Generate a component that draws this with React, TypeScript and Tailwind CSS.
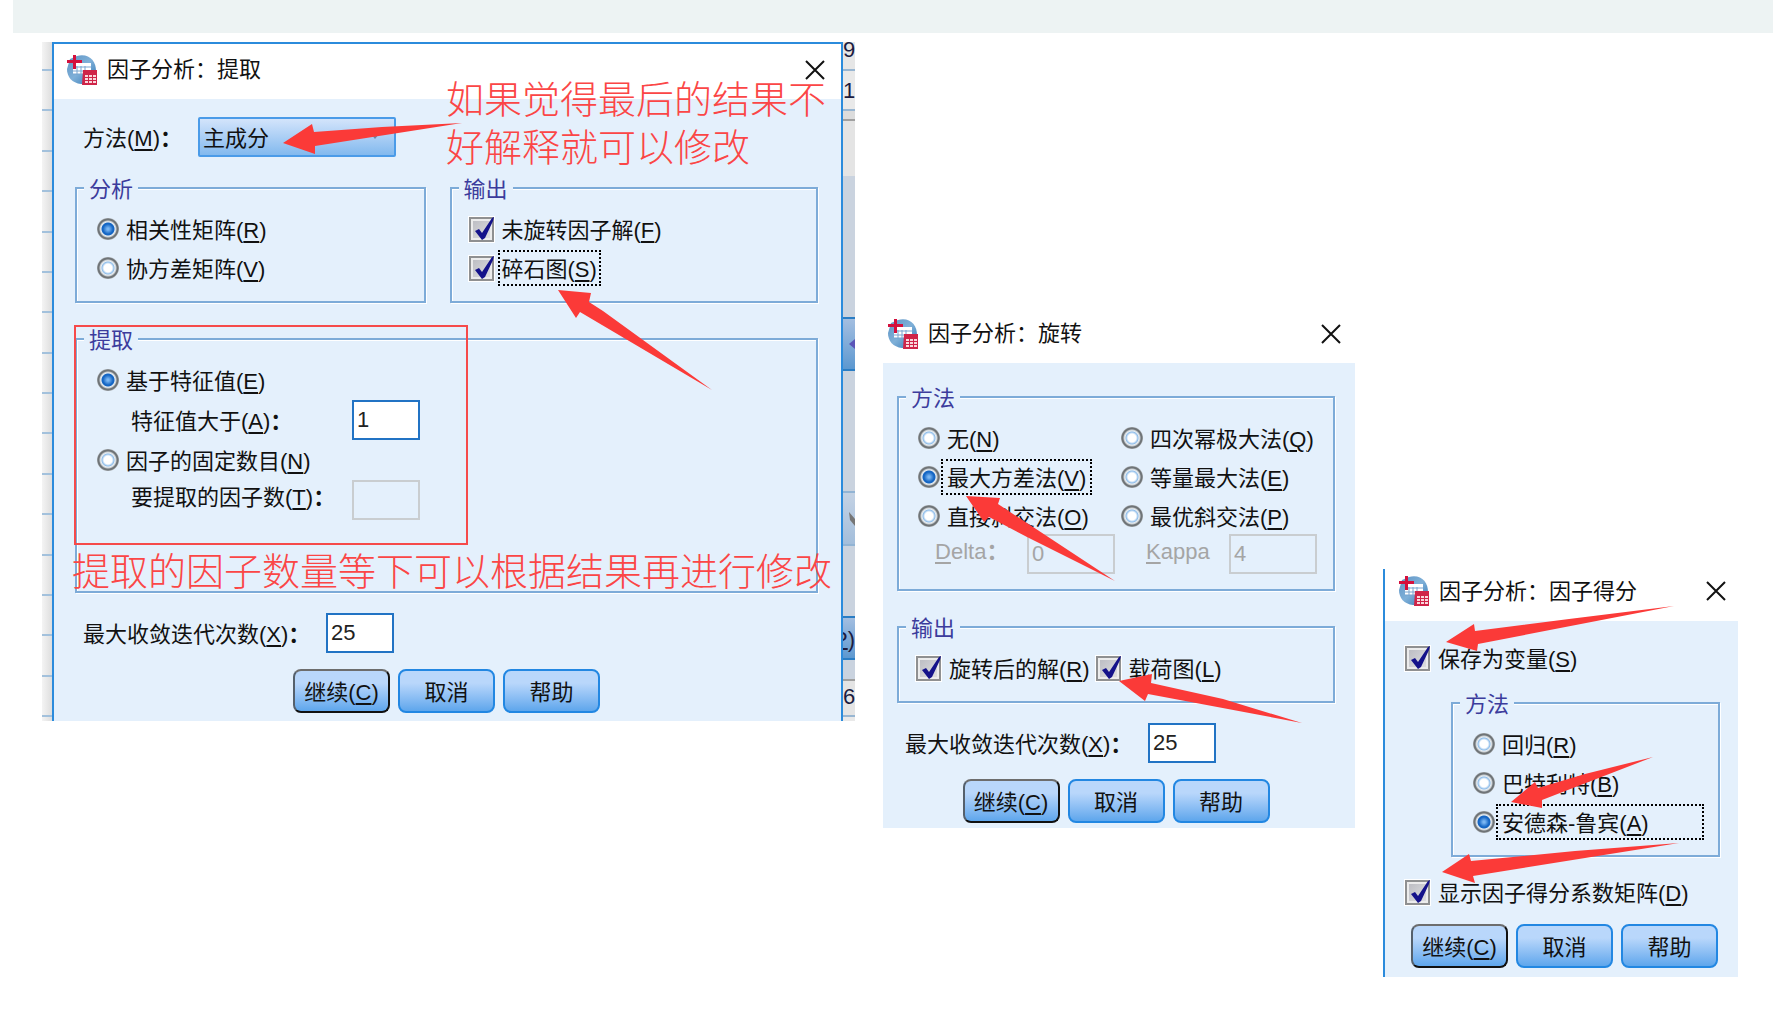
import type { ReactNode } from 'react';
import clsx from 'clsx';

interface OptionProps {
  text: string;
  hotkey: string;
  checked?: boolean;
  focused?: boolean;
}

function Hotkey({ text, hotkey }: { text: string; hotkey: string }) {
  return (
    <>
      {text}(<span className="underline decoration-2 underline-offset-3">{hotkey}</span>)
    </>
  );
}

function Radio({ text, hotkey, checked, focused, name, wide }: OptionProps & { name: string; wide?: boolean }) {
  return (
    <label className="flex h-9 items-center gap-px whitespace-nowrap">
      <input
        type="radio"
        name={name}
        defaultChecked={checked}
        className="size-[22px] shrink-0 appearance-none rounded-full bg-[radial-gradient(circle_closest-side,#ffffff_0_4px,#8fbdea_6px,#e8eef2_7px,#c9ced2_8px,#6f7477_9px_10px,#a4a9ad_11px)] checked:bg-[radial-gradient(circle_closest-side,#7ab6f2_0_1px,#1566c4_5px_6px,#e8eef2_7px,#c9ced2_8px,#6f7477_9px_10px,#a4a9ad_11px)]"
      />
      <span
        className={clsx(
          'h-9 border-2 border-dotted px-1 leading-9',
          focused ? 'border-black' : 'border-transparent',
          wide && 'grow',
        )}
      >
        <Hotkey text={text} hotkey={hotkey} />
      </span>
    </label>
  );
}

function Checkbox({ text, hotkey, checked, focused }: OptionProps) {
  return (
    <label className="flex h-9 items-center gap-1 whitespace-nowrap">
      <span className="relative size-[25px] shrink-0">
        <input
          type="checkbox"
          defaultChecked={checked}
          className="peer block size-[25px] appearance-none border-2 border-[#8f9091] bg-linear-to-br from-[#b9bac0] to-[#e2e2e4] shadow-[0_0_0_1px_#fff,inset_0_0_0_2px_#ececec]"
        />
        <svg
          viewBox="0 0 25 25"
          className="pointer-events-none absolute inset-0 hidden overflow-visible peer-checked:block"
        >
          <path d="M6 14 L10 12 L13 16 L23 1 L25 0 L24 4 L16 21 L13 23 Z" fill="#14128a" />
        </svg>
      </span>
      <span
        className={clsx('h-9 border-2 border-dotted px-0.5 leading-9', focused ? 'border-black' : 'border-transparent')}
      >
        <Hotkey text={text} hotkey={hotkey} />
      </span>
    </label>
  );
}

function Group({ title, className, children }: { title: string; className?: string; children: ReactNode }) {
  return (
    <fieldset
      className={clsx(
        'min-w-0 border-2 border-[#7dabd8] pb-[15px] shadow-[1px_1px_0_#fff,inset_1px_1px_0_#fff]',
        className,
      )}
    >
      <legend className="ml-[7px] h-6 bg-[#e4f0fc] px-[5px] leading-7 text-[#3c3c9c]">{title}</legend>
      <div className="pt-[11px]">{children}</div>
    </fieldset>
  );
}

function NumberBox({ id, value, disabled, className }: { id: string; value: string; disabled?: boolean; className?: string }) {
  return (
    <input
      id={id}
      type="text"
      defaultValue={value}
      disabled={disabled}
      className={clsx(
        'h-10 border-2 px-[3px]',
        disabled ? 'border-[#c9cdd0] bg-transparent text-[#a5a5a5]' : 'border-[#2173c4] bg-white text-[#222]',
        className ?? 'w-[68px]',
      )}
    />
  );
}

function Iterations({ id }: { id: string }) {
  return (
    <div className="mt-5 flex items-center pl-2">
      <label htmlFor={id} className="w-[243px] pt-1 whitespace-nowrap">
        <Hotkey text="最大收敛迭代次数" hotkey="X" />
        <b>：</b>
      </label>
      <NumberBox id={id} value="25" />
    </div>
  );
}

function Buttons({ className }: { className: string }) {
  const base =
    'h-11 w-[97px] rounded-lg border-2 bg-linear-to-b from-[#b9d7fb] from-30% to-[#5ea6ec] pt-1 whitespace-nowrap';
  return (
    <div className={clsx('flex justify-center gap-2', className)}>
      <button
        type="button"
        className={clsx(base, 'border-t-[#6d6d6d] border-r-[#111] border-b-[#111] border-l-[#55606c]')}
      >
        <Hotkey text="继续" hotkey="C" />
      </button>
      <button type="button" className={clsx(base, 'border-[#2287e2]')}>
        取消
      </button>
      <button type="button" className={clsx(base, 'border-[#2287e2]')}>
        帮助
      </button>
    </div>
  );
}

function Logo() {
  return (
    <svg viewBox="0 0 30 30" className="size-[30px] shrink-0">
      <defs>
        <linearGradient id="globe" x1="0" y1="0" x2="1" y2="1">
          <stop offset="0" stopColor="#5d93c4" />
          <stop offset="0.5" stopColor="#7fb0d8" />
          <stop offset="1" stopColor="#2f74b3" />
        </linearGradient>
      </defs>
      <path d="M10 1 C22 -2 29 6 29 16 L29 29 L14 29 C5 28 0 22 0 14 L3 4 Z" fill="url(#globe)" />
      <path d="M6 8 H24 V19 H6 Z" fill="#fff" />
      <path d="M6 12 H24 M6 16 H16 M6 19 H16 M10 11 V20 M14 11 V20 M18 11 V15" stroke="#78a5d0" strokeWidth="1" />
      <path d="M6 0 H9 V5 H15 V8 H9 V14 H6 V8 H0 V5 H6 Z" fill="#d4103c" />
      <path d="M16 15 H30 V30 H15 Z" fill="#cf2448" />
      <path d="M18 20 H21 V22 H18 Z M22 20 H25 V22 H22 Z M26 20 H29 V22 H26 Z M18 23 H21 V25 H18 Z M22 23 H25 V25 H22 Z M26 23 H29 V25 H26 Z M18 26 H21 V28 H18 Z M22 26 H25 V28 H22 Z M26 26 H29 V28 H26 Z" fill="#f9d7dc" />
    </svg>
  );
}

function TitleBar({ title, className }: { title: string; className: string }) {
  return (
    <header className={clsx('flex items-center gap-2.5 bg-white', className)}>
      <Logo />
      <h2 className="grow pt-px whitespace-nowrap">{title}</h2>
      <button type="button" aria-label="关闭" className="size-6">
        <svg viewBox="0 0 24 24" className="size-6">
          <path d="M3 3 L21 21 M21 3 L3 21" stroke="#111" strokeWidth="2" />
        </svg>
      </button>
    </header>
  );
}

// Red marker arrows; points are in the dialog's own pixels
function Arrows({ points }: { points: string[] }) {
  return (
    <svg className="pointer-events-none absolute inset-0 size-full overflow-visible">
      {points.map((p) => (
        <polygon key={p} points={p} fill="#fb3a38" />
      ))}
    </svg>
  );
}

function LeftEdge() {
  return (
    <div className="flex w-2.5 shrink-0 flex-col bg-linear-to-r from-[#f4f4f4] to-[#dedede]">
      <div className="h-[29px] border-b-2 border-[#a3c1dc]" />
      {Array.from({ length: 16 }, (_, i) => (
        <div key={i} className="flex-1 border-b-2 border-[#a3c1dc]" />
      ))}
      <div className="h-1" />
    </div>
  );
}

function RightEdge() {
  return (
    <div className="flex w-3 shrink-0 flex-col overflow-hidden bg-[#cad3df] text-[#1c1c40]">
      <div className="h-[29px] border-b-2 border-[#98b6d2] bg-[#e6e6e6] leading-4">9</div>
      <div className="h-10 border-b-2 border-[#98b6d2] bg-[#e9e9e9] leading-10">1</div>
      <div className="h-[10px] border-b-2 border-[#a0a0a0] bg-[#dcdcdc]" />
      <div className="h-[55px] bg-[#e4e4e4]" />
      <div className="h-[141px]" />
      <div className="flex h-[54px] items-center justify-end border-y-2 border-[#2a7dc4] bg-linear-to-b from-[#a3bee0] to-[#5c98d0]">
        <svg viewBox="0 0 6 10" className="h-2.5 w-1.5">
          <path d="M0 5 L6 0 V10 Z" fill="#5b55b8" />
        </svg>
      </div>
      <div className="h-[120px]" />
      <div className="flex h-[55px] items-center justify-end border-y-2 border-[#92b4d4] bg-linear-to-b from-[#c4d2e4] to-[#a3bedb]">
        <svg viewBox="0 0 6 14" className="h-3.5 w-1.5">
          <path d="M0 0 L6 7 V14 L1 8 Z" fill="#767676" />
        </svg>
      </div>
      <div className="h-[70px]" />
      <div className="flex h-11 justify-end border-y-2 border-[#2a7dc4] bg-linear-to-b from-[#a3bee0] to-[#5c98d0] leading-11">
        <span className="underline decoration-2">P</span>)
      </div>
      <div className="h-[19px]" />
      <div className="h-[38px] border-y-2 border-t-[#a0a0a0] border-b-[#98b6d2] bg-[#e4e4e4] leading-8">6</div>
      <div className="grow bg-[#e9e9e9]" />
    </div>
  );
}

function ExtractionDialog() {
  return (
    <section className="relative flex">
      <LeftEdge />
      <div className="grow border-2 border-b-0 border-[#2b8bdc] bg-[#e4f0fc]">
        <TitleBar title="因子分析：提取" className="h-[55px] pr-3.5 pb-1 pl-[13px]" />
        <div className="pt-[18px] pr-[23px] pb-2 pl-[21px]">
          <div className="flex items-center pl-2">
            <label htmlFor="method" className="w-[115px] pt-1 whitespace-nowrap">
              <Hotkey text="方法" hotkey="M" />
              <b>：</b>
            </label>
            <div className="relative">
              <select
                id="method"
                className="h-10 w-[198px] appearance-none rounded-xs border-2 border-[#4a9be8] bg-linear-to-b from-[#d3e4fb] to-[#82b9ee] px-[3px] pt-1"
              >
                <option>主成分</option>
              </select>
              <svg viewBox="0 0 10 6" className="pointer-events-none absolute top-[17px] right-4 h-1.5 w-2.5">
                <path d="M1 0 H9 L5 5 Z" fill="#6a86a6" />
              </svg>
            </div>
          </div>

          <div className="mt-[19px] grid grid-cols-[351fr_369fr] gap-6">
            <Group title="分析">
              <div className="flex flex-col gap-[3px] pl-5">
                <Radio name="matrix" text="相关性矩阵" hotkey="R" checked />
                <Radio name="matrix" text="协方差矩阵" hotkey="V" />
              </div>
            </Group>
            <Group title="输出">
              <div className="flex flex-col items-start gap-[3px] pl-[17px]">
                <Checkbox text="未旋转因子解" hotkey="F" checked />
                <Checkbox text="碎石图" hotkey="S" checked focused />
              </div>
            </Group>
          </div>

          <Group title="提取" className="mt-6">
            <div className="flex flex-col gap-0.5 pb-14 pl-5">
              <Radio name="extract" text="基于特征值" hotkey="E" checked />
              <div className="flex items-center pl-[34px]">
                <label htmlFor="eigen" className="w-[221px] pt-1 whitespace-nowrap">
                  <Hotkey text="特征值大于" hotkey="A" />
                  <b>：</b>
                </label>
                <NumberBox id="eigen" value="1" />
              </div>
              <Radio name="extract" text="因子的固定数目" hotkey="N" />
              <div className="flex items-start pl-[34px]">
                <label htmlFor="factors" className="w-[221px] pt-0.5 whitespace-nowrap">
                  <Hotkey text="要提取的因子数" hotkey="T" />
                  <b>：</b>
                </label>
                <NumberBox id="factors" value="" disabled />
              </div>
            </div>
          </Group>

          <Iterations id="iter-extract" />
          <Buttons className="mt-4" />
        </div>
      </div>
      <RightEdge />

      <div className="pointer-events-none absolute top-[283px] left-8 h-[220px] w-[394px] border-2 border-[#f64a4a]" />
      <p className="absolute top-[34px] left-[404px] text-[38px] leading-12 font-light whitespace-nowrap text-[#fb4646]">
        如果觉得最后的结果不
        <br />
        好解释就可以修改
      </p>
      <p className="absolute top-[506px] left-[30px] text-[38px] leading-12 font-light whitespace-nowrap text-[#fb4646]">
        提取的因子数量等下可以根据结果再进行修改
      </p>
      <Arrows
        points={[
          '241,101 270,82 272,90 340,85 420,81 273,104 273,112',
          '516,248 549,251 547,260 561,269 670,348 538,270 534,276',
        ]}
      />
    </section>
  );
}

function RotationDialog() {
  return (
    <section className="relative mt-[266px] bg-[#e4f0fc]">
      <TitleBar title="因子分析：旋转" className="h-[55px] pr-3 pb-1 pl-[5px]" />
      <div className="pt-[22px] pr-5 pb-[5px] pl-3.5">
        <Group title="方法">
          <div className="grid grid-cols-[203fr_212fr] gap-y-[3px] pl-[19px]">
            <Radio name="rotation" text="无" hotkey="N" />
            <Radio name="rotation" text="四次幂极大法" hotkey="Q" />
            <Radio name="rotation" text="最大方差法" hotkey="V" checked focused />
            <Radio name="rotation" text="等量最大法" hotkey="E" />
            <Radio name="rotation" text="直接斜交法" hotkey="O" />
            <Radio name="rotation" text="最优斜交法" hotkey="P" />
          </div>
          <div className="grid grid-cols-[203fr_212fr] pl-[19px] text-[#a5a5a5]">
            <div className="flex pl-[17px]">
              <label htmlFor="delta" className="w-[92px] leading-9 whitespace-nowrap">
                <span className="underline decoration-2 underline-offset-3">D</span>elta<b>：</b>
              </label>
              <NumberBox id="delta" value="0" disabled className="w-[88px]" />
            </div>
            <div className="flex pl-[25px]">
              <label htmlFor="kappa" className="w-[83px] leading-9">
                <span className="underline decoration-2 underline-offset-3">K</span>appa
              </label>
              <NumberBox id="kappa" value="4" disabled className="w-[88px]" />
            </div>
          </div>
        </Group>
        <Group title="输出" className="mt-6">
          <div className="flex gap-0.5 pl-[17px]">
            <Checkbox text="旋转后的解" hotkey="R" checked />
            <Checkbox text="载荷图" hotkey="L" checked />
          </div>
        </Group>
        <Iterations id="iter-rotate" />
        <Buttons className="mt-4" />
      </div>
      <Arrows
        points={[
          '83,188 117,190 115,196 232,273 144,229 106,209 101,214',
          '236,373 269,366 268,375 340,391 419,415 265,386 262,393',
        ]}
      />
    </section>
  );
}

function ScoresDialog() {
  return (
    <section className="relative mt-[527px] border-l-2 border-[#2b8bdc] bg-[#e4f0fc]">
      <TitleBar title="因子分析：因子得分" className="h-[52px] pr-2.5 pb-2 pl-3.5" />
      <div className="pt-[19px] pr-[18px] pb-[9px] pl-5">
        <Checkbox text="保存为变量" hotkey="S" checked />
        <Group title="方法" className="mt-[15px] ml-[46px]">
          <div className="flex flex-col gap-[3px] pr-3.5 pl-5">
            <Radio name="scores" text="回归" hotkey="R" />
            <Radio name="scores" text="巴特利特" hotkey="B" />
            <Radio name="scores" text="安德森-鲁宾" hotkey="A" checked focused wide />
          </div>
        </Group>
        <div className="mt-[17px]">
          <Checkbox text="显示因子得分系数矩阵" hotkey="D" checked />
        </div>
        <Buttons className="mt-3.5 pl-1" />
      </div>
      <Arrows
        points={[
          '61,73 89,55 90,62 184,50 289,37 93,75 92,82',
          '126,233 150,213 153,219 200,205 268,188 157,231 157,239',
          '57,303 84,285 86,292 190,282 294,274 88,307 90,314',
        ]}
      />
    </section>
  );
}

export default function App() {
  return (
    <main className="min-h-screen bg-white font-['Liberation_Sans','Noto_Sans_CJK_SC',sans-serif] text-[22px] leading-8 text-[#111]">
      <div className="mr-[15px] ml-[13px] h-[33px] bg-[#edf3f3]" />
      <div className="mt-[9px] grid grid-cols-[813fr_472fr_355fr] items-start gap-7 pr-[50px] pl-[42px]">
        <ExtractionDialog />
        <RotationDialog />
        <ScoresDialog />
      </div>
    </main>
  );
}
